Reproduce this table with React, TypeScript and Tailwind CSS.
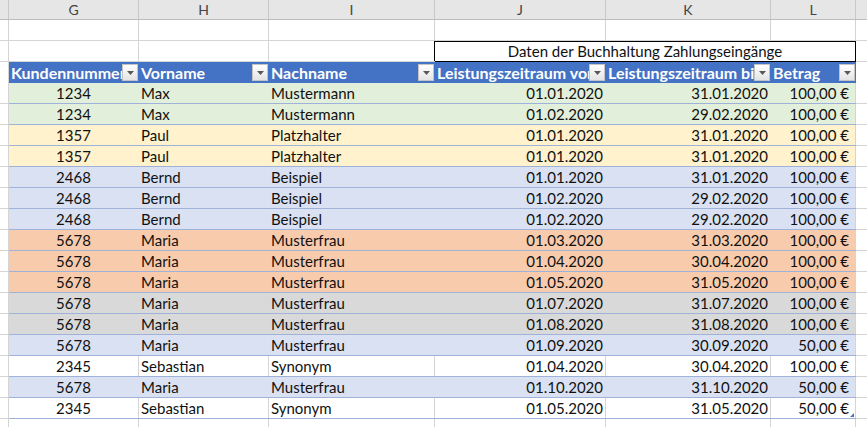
import React from 'react';

type Tone = 'green' | 'yellow' | 'blue' | 'orange' | 'grey' | 'white';

const rows: [string, string, string, string, string, string, Tone][] = [
  ['1234', 'Max', 'Mustermann', '01.01.2020', '31.01.2020', '100,00 €', 'green'],
  ['1234', 'Max', 'Mustermann', '01.02.2020', '29.02.2020', '100,00 €', 'green'],
  ['1357', 'Paul', 'Platzhalter', '01.01.2020', '31.01.2020', '100,00 €', 'yellow'],
  ['1357', 'Paul', 'Platzhalter', '01.01.2020', '31.01.2020', '100,00 €', 'yellow'],
  ['2468', 'Bernd', 'Beispiel', '01.01.2020', '31.01.2020', '100,00 €', 'blue'],
  ['2468', 'Bernd', 'Beispiel', '01.02.2020', '29.02.2020', '100,00 €', 'blue'],
  ['2468', 'Bernd', 'Beispiel', '01.02.2020', '29.02.2020', '100,00 €', 'blue'],
  ['5678', 'Maria', 'Musterfrau', '01.03.2020', '31.03.2020', '100,00 €', 'orange'],
  ['5678', 'Maria', 'Musterfrau', '01.04.2020', '30.04.2020', '100,00 €', 'orange'],
  ['5678', 'Maria', 'Musterfrau', '01.05.2020', '31.05.2020', '100,00 €', 'orange'],
  ['5678', 'Maria', 'Musterfrau', '01.07.2020', '31.07.2020', '100,00 €', 'grey'],
  ['5678', 'Maria', 'Musterfrau', '01.08.2020', '31.08.2020', '100,00 €', 'grey'],
  ['5678', 'Maria', 'Musterfrau', '01.09.2020', '30.09.2020', '50,00 €', 'blue'],
  ['2345', 'Sebastian', 'Synonym', '01.04.2020', '30.04.2020', '100,00 €', 'white'],
  ['5678', 'Maria', 'Musterfrau', '01.10.2020', '31.10.2020', '50,00 €', 'blue'],
  ['2345', 'Sebastian', 'Synonym', '01.05.2020', '31.05.2020', '50,00 €', 'white'],
];

const toneBg: Record<Tone, string> = {
  green: 'bg-[#e2efda]',
  yellow: 'bg-[#fff2cc]',
  blue: 'bg-[#d9e1f2]',
  orange: 'bg-[#f8cbad]',
  grey: 'bg-[#d9d9d9]',
  white: 'bg-white',
};

const widths = ['w-[130px]', 'w-[130px]', 'w-[166px]', 'w-[171px]', 'w-[165px]', 'w-[85px]'];
const letters = ['G', 'H', 'I', 'J', 'K', 'L'];
const headers = [
  'Kundennummer',
  'Vorname',
  'Nachname',
  'Leistungszeitraum von',
  'Leistungszeitraum bis',
  'Betrag',
];

function FilterButton() {
  return (
    <div className="flex h-[17px] w-[16px] shrink-0 items-center justify-center border border-[#c4c4c4] bg-gradient-to-b from-white to-[#e4e4e4]">
      <svg width="7" height="4" viewBox="0 0 7 4">
        <path d="M0 0h7L3.5 4z" fill="#595959" />
      </svg>
    </div>
  );
}

function Stub() {
  return <div className="h-full w-[9px] shrink-0 border-r border-[#d4d4d4]" />;
}

function Rest() {
  return <div className="h-full flex-1" />;
}

function EmptyRow() {
  return (
    <div className="flex h-[21px] border-b border-[#d4d4d4]">
      <Stub />
      {widths.map((w, i) => (
        <div key={i} className={`${w} h-full shrink-0 border-r border-[#d4d4d4]`} />
      ))}
      <Rest />
    </div>
  );
}

export default function App() {
  return (
    <div className="h-[427px] w-[867px] overflow-hidden bg-white font-['Lato',sans-serif] text-[15px] text-[#111]">
      {/* column letters */}
      <div className="flex h-[20px] border-b border-[#bdbdbd] bg-[#e6e6e6] text-[14px] text-[#444]">
        <div className="h-full w-[9px] shrink-0 border-r border-[#c8c8c8]" />
        {widths.map((w, i) => (
          <div
            key={i}
            className={`${w} flex h-full shrink-0 items-center justify-center border-r border-[#c8c8c8]`}
          >
            {letters[i]}
          </div>
        ))}
        <Rest />
      </div>

      <EmptyRow />

      {/* title row */}
      <div className="flex h-[21px] border-b border-[#d4d4d4]">
        <Stub />
        <div className="h-full w-[130px] shrink-0 border-r border-[#d4d4d4]" />
        <div className="h-full w-[130px] shrink-0 border-r border-[#d4d4d4]" />
        <div className="h-full w-[166px] shrink-0 border-r border-black" />
        <div className="flex h-[21px] w-[421px] shrink-0 items-center justify-center border-t border-r border-b border-black">
          Daten der Buchhaltung Zahlungseingänge
        </div>
        <Rest />
      </div>

      {/* table header */}
      <div className="flex h-[21px]">
        <Stub />
        {widths.map((w, i) => (
          <div
            key={i}
            className={`${w} flex h-full shrink-0 items-center bg-[#4472c4] pl-[2px] pr-[1px] text-[16px] font-bold text-white`}
          >
            <span className="flex-1 overflow-hidden whitespace-nowrap">{headers[i]}</span>
            <FilterButton />
          </div>
        ))}
        <Rest />
      </div>

      {/* data rows */}
      {rows.map((r, ri) => {
        const grid = r[6] === 'white' ? 'border-r-[#d4d4d4]' : 'border-r-transparent';
        const last = ri === rows.length - 1;
        return (
          <div key={ri} className="flex h-[21px]">
            <div className="h-full w-[9px] shrink-0 border-r border-b border-[#d4d4d4]" />
            <div className={`flex flex-[0_0_847px] border-b border-[#9fb3da] ${toneBg[r[6]]}`}>
              <div className={`${widths[0]} flex h-full shrink-0 items-center justify-center border-r ${grid}`}>
                {r[0]}
              </div>
              <div className={`${widths[1]} flex h-full shrink-0 items-center border-r pl-[2px] ${grid}`}>
                {r[1]}
              </div>
              <div className={`${widths[2]} flex h-full shrink-0 items-center border-r pl-[2px] ${grid}`}>
                {r[2]}
              </div>
              <div className={`${widths[3]} flex h-full shrink-0 items-center justify-end border-r pr-[2px] ${grid}`}>
                {r[3]}
              </div>
              <div className={`${widths[4]} flex h-full shrink-0 items-center justify-end border-r pr-[2px] ${grid}`}>
                {r[4]}
              </div>
              <div className="relative flex h-full w-[85px] shrink-0 items-center justify-end border-r border-r-[#d4d4d4] pr-[6px]">
                {r[5]}
                {last && (
                  <svg className="absolute bottom-[1px] right-[1px]" width="4" height="4" viewBox="0 0 4 4">
                    <path d="M4 0v4H0z" fill="#4472c4" />
                  </svg>
                )}
              </div>
            </div>
            <div className="h-full flex-1 border-b border-[#d4d4d4]" />
          </div>
        );
      })}

      <EmptyRow />
    </div>
  );
}
